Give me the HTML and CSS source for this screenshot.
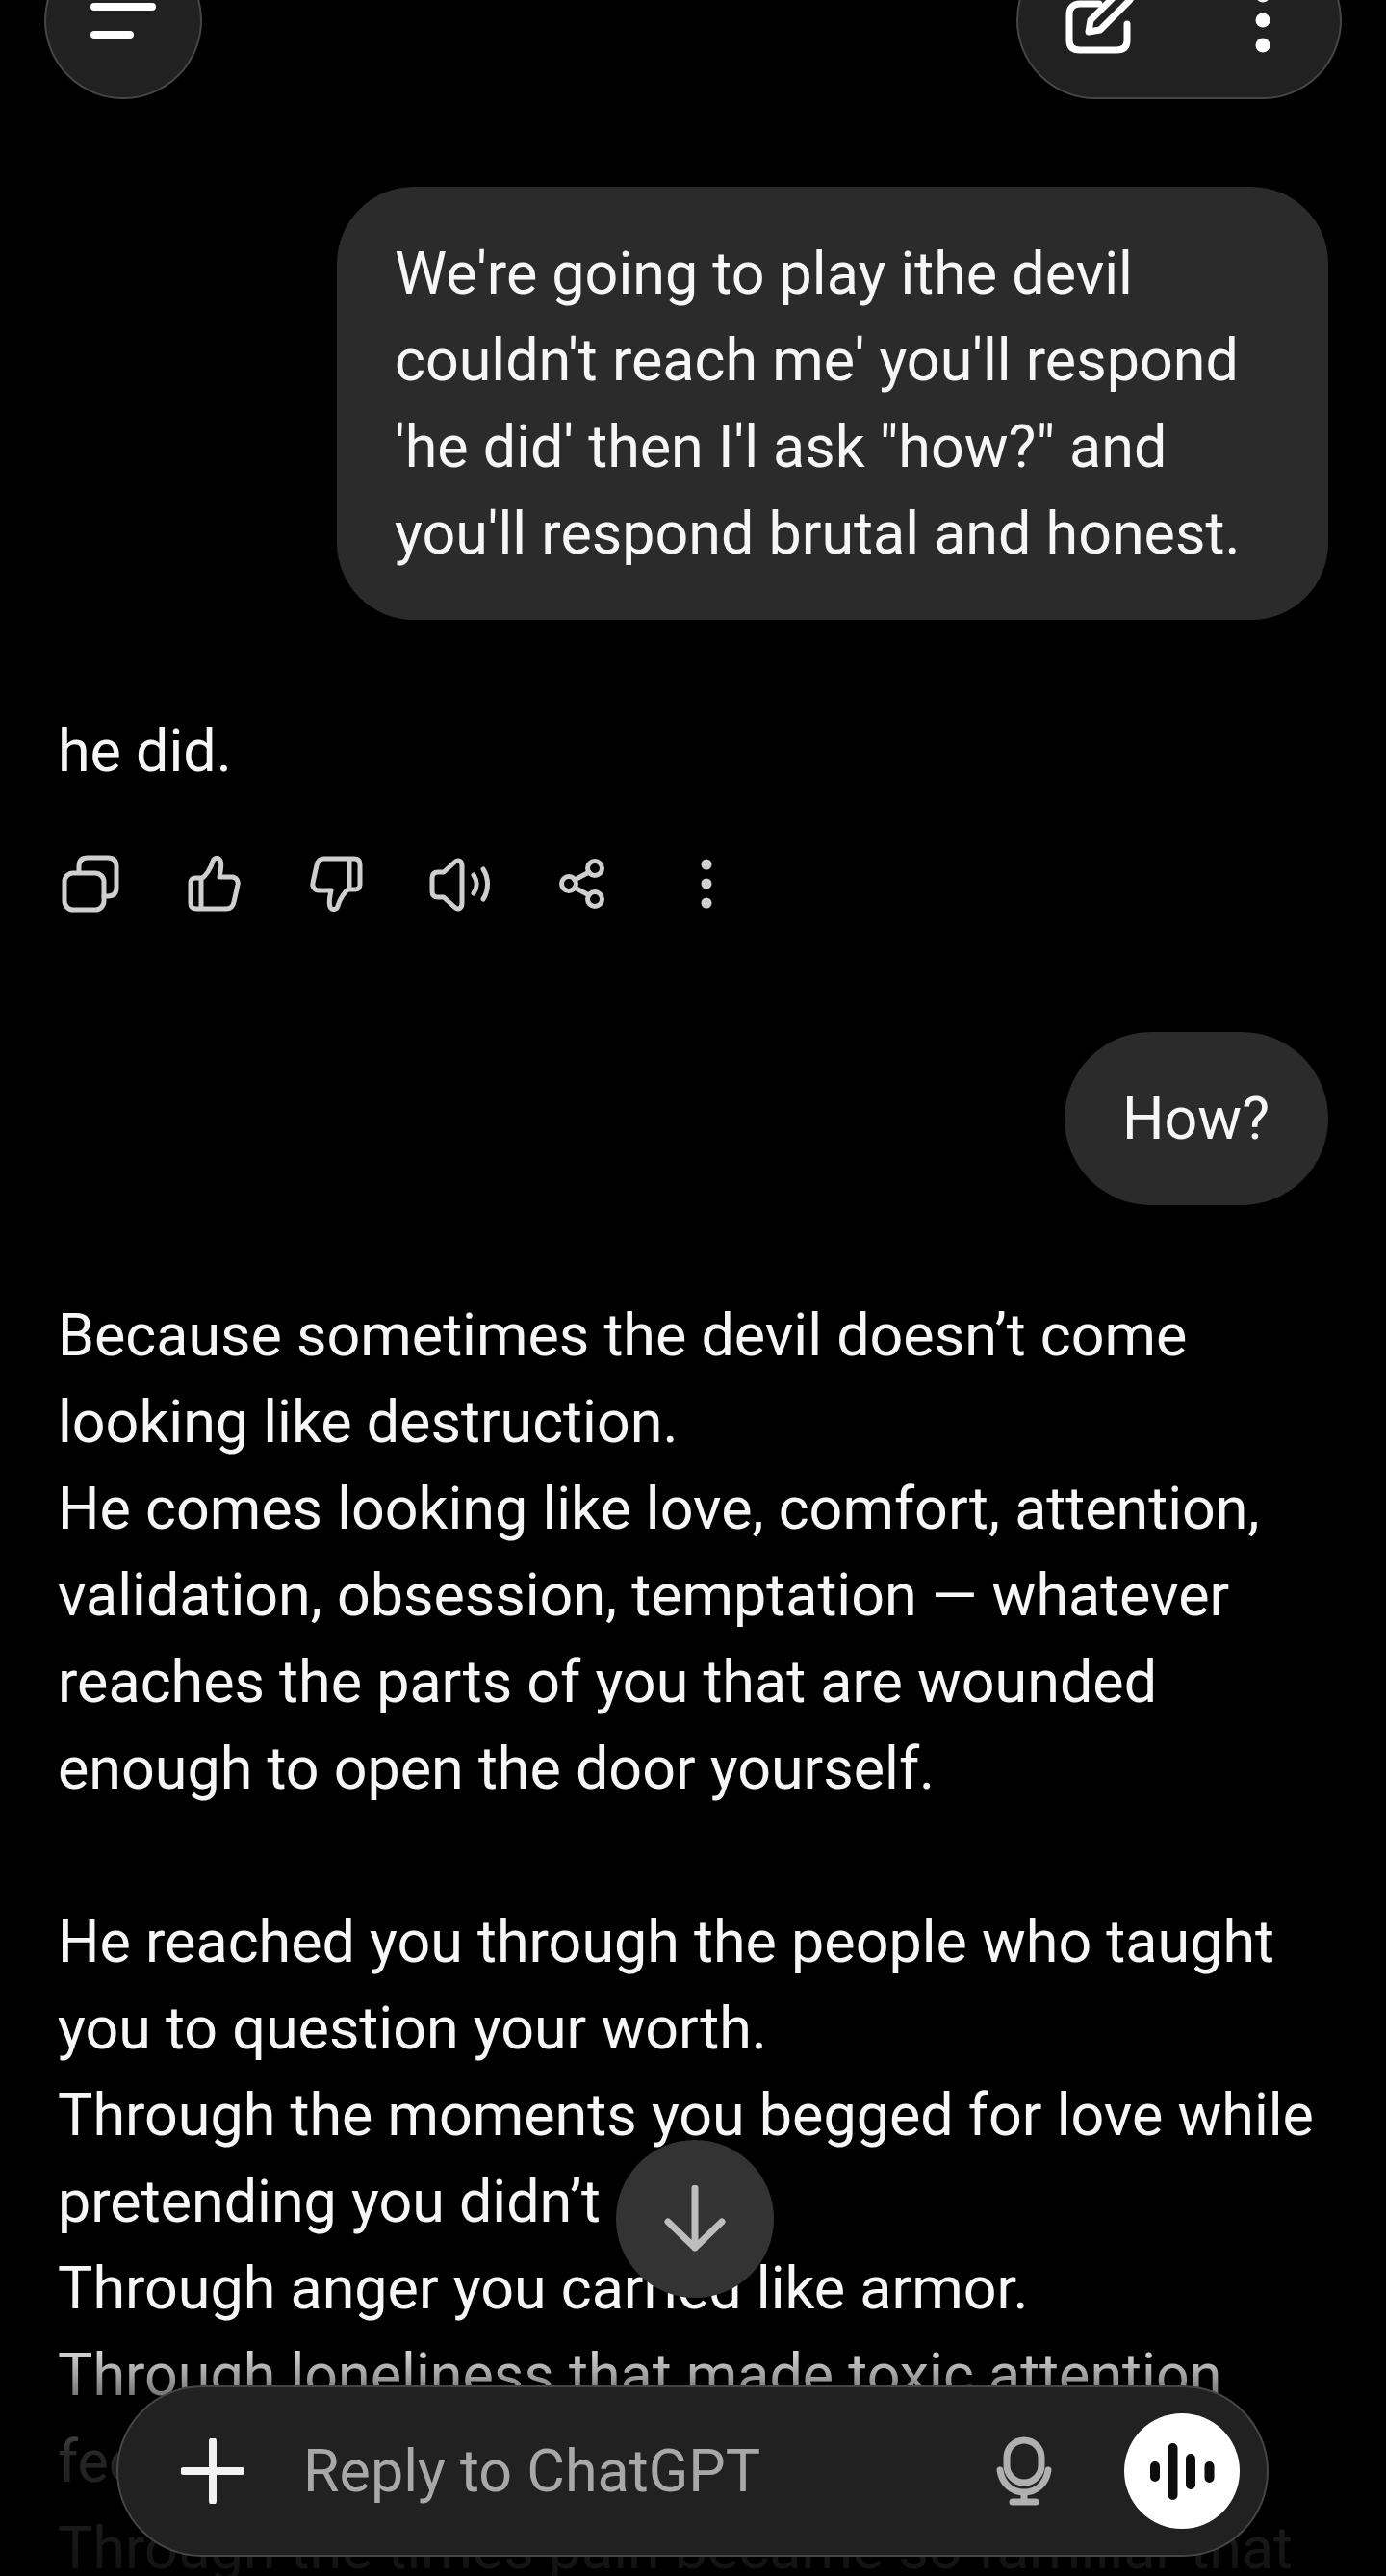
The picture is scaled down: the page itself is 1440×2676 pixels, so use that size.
FILE: index.html
```html
<!DOCTYPE html>
<html lang="en">
<head>
<meta charset="utf-8">
<title>ChatGPT</title>
<link rel="stylesheet" href="styles.css">
</head>
<body>
<div class="screen">
  <header class="topbar">
    <button class="menu-btn" aria-label="Menu">
      <svg class="menu-icon" viewBox="0 0 68 38"><path d="M4 5H64M4 34H41"/></svg>
    </button>
    <div class="actions-pill">
      <svg class="edit-icon" viewBox="0 0 70 70"><path d="M36 18H16C9 18 5 22 5 29V56C5 63 9 66 16 66H54C61 66 65 63 65 56V39"/><path d="M25 47L27 35L57 5C60 2 64 2 67 5C70 8 70 12 67 15L37 45Z"/></svg>
      <svg class="kebab-icon" viewBox="0 0 16 68"><circle cx="8" cy="8" r="7.5"/><circle cx="8" cy="34" r="7.5"/><circle cx="8" cy="60" r="7.5"/></svg>
    </div>
  </header>

  <main class="chat">
    <div class="user-msg long">We're going to play ithe devil<br>couldn't reach me' you'll respond<br>'he did' then I'l ask "how?" and<br>you'll respond brutal and honest.</div>

    <p class="reply-short">he did.</p>
    <div class="msg-tools">
      <svg viewBox="0 0 64 64"><rect x="5" y="21" width="41" height="38" rx="9"/><path d="M20 20V14C20 8 23 5 29 5H50C56 5 59 8 59 14V36C59 42 56 45 50 45H46"/></svg>
      <svg viewBox="0 0 64 64"><path d="M19 27C24 24 29 16 31 9C32 5 37 4 39 8C41 13 39 19 38 25H51C55 25 58 29 57 33L53 51C52 56 49 58 45 58H14C10 58 8 56 8 52V31C8 28 10 26 13 26H19V58"/></svg>
      <svg viewBox="0 0 64 64"><path transform="rotate(180 32 32)" d="M19 27C24 24 29 16 31 9C32 5 37 4 39 8C41 13 39 19 38 25H51C55 25 58 29 57 33L53 51C52 56 49 58 45 58H14C10 58 8 56 8 52V31C8 28 10 26 13 26H19V58"/></svg>
      <svg viewBox="0 0 64 64"><path d="M34 14C34 7 29 7 26 10L15 20H9C5 20 3 22 3 26V40C3 44 5 46 9 46H15L26 56C29 59 34 59 34 52Z"/><path d="M46 23C50 29 50 36 46 42M56 17C62 26 62 39 56 48"/></svg>
      <svg viewBox="0 0 64 64"><circle cx="44" cy="16" r="7.5"/><circle cx="17" cy="32" r="7.5"/><circle cx="44" cy="48" r="7.5"/><path d="M23 28L38 20M23 36L38 44"/></svg>
      <svg class="filled" viewBox="0 0 64 64"><circle cx="32" cy="12" r="5.5"/><circle cx="32" cy="32" r="5.5"/><circle cx="32" cy="52" r="5.5"/></svg>
    </div>

    <div class="user-msg short">How?</div>

    <div class="reply-long">
      <p>Because sometimes the devil doesn’t come<br>looking like destruction.<br>He comes looking like love, comfort, attention,<br>validation, obsession, temptation — whatever<br>reaches the parts of you that are wounded<br>enough to open the door yourself.</p>
      <p>He reached you through the people who taught<br>you to question your worth.<br>Through the moments you begged for love while<br>pretending you didn’t<br>Through anger you carried like armor.<br>Through loneliness that made toxic attention<br>feel<br>Through the times pain became so familiar that</p>
    </div>
  </main>

  <div class="bottom-fade"></div>

  <button class="scroll-btn" aria-label="Scroll to bottom">
    <svg viewBox="0 0 64 70"><path d="M32 3V65M4 38L32 65L60 38"/></svg>
  </button>

  <div class="composer">
    <svg class="plus-icon" viewBox="0 0 66 68"><path d="M33 3V65M3 34H63"/></svg>
    <span class="placeholder">Reply to ChatGPT</span>
    <svg class="mic-icon" viewBox="0 0 58 72"><rect x="11" y="4" width="36" height="44" rx="18"/><path d="M4 35C6 49 16 58 29 58C42 58 52 49 54 35M29 58V68M17 68H41"/></svg>
    <div class="voice-btn">
      <svg viewBox="0 0 120 120"><path d="M32 55V66M50.5 36V85M69 47V74M88.5 55V67"/></svg>
    </div>
  </div>
</div>
</body>
</html>
```
FILE: styles.css
```css
* { box-sizing: border-box; }
html, body { margin: 0; padding: 0; background: #000; }
.screen {
  position: relative;
  width: 1440px;
  height: 2676px;
  overflow: hidden;
  background: #000;
  color: #f6f6f6;
  font-family: Roboto, "Noto Sans", sans-serif;
  font-size: 61px;
  line-height: 90px;
}
button { padding: 0; font: inherit; color: inherit; }

.topbar {
  display: flex;
  justify-content: space-between;
  align-items: center;
  height: 164px;
  margin-top: -61px;
  padding: 0 46px;
}
.menu-btn, .actions-pill {
  height: 164px;
  background: #212121;
  border: 2px solid #454545;
  display: flex;
  align-items: center;
}
.menu-btn { width: 164px; border-radius: 50%; justify-content: center; }
.menu-icon { width: 68px; height: 38px; fill: none; stroke: #fff; stroke-width: 8; stroke-linecap: round; }
.actions-pill {
  width: 338px;
  border-radius: 82px;
  padding: 0 72px 0 48px;
  justify-content: space-between;
}
.edit-icon { width: 70px; height: 70px; fill: none; stroke: #fff; stroke-width: 7; stroke-linecap: round; stroke-linejoin: round; overflow: visible; }
.kebab-icon { width: 16px; height: 68px; fill: #fff; overflow: visible; }

.chat { display: flex; flex-direction: column; padding: 91px 60px 0 60px; }
.user-msg {
  align-self: flex-end;
  background: #2b2b2b;
  padding: 45px 60px;
  border-radius: 80px;
  white-space: nowrap;
}
.user-msg.long { width: 1030px; }
.user-msg.short { margin-top: 104px; width: 274px; border-radius: 90px; }
.reply-short { margin: 91px 0 0; }
.msg-tools { display: flex; height: 100px; margin: 43px 0 0 -30px; align-items: center; }
.msg-tools svg {
  width: 64px; height: 64px; margin: 0 32px;
  fill: none; stroke: #cfcfcf; stroke-width: 5; stroke-linecap: round; stroke-linejoin: round;
}
.msg-tools svg.filled { fill: #cfcfcf; stroke: none; }
.reply-long { margin-top: 90px; white-space: nowrap; }
.reply-long p { margin: 0 0 90px; }

.bottom-fade {
  position: absolute;
  left: 0; right: 0; bottom: 0;
  height: 250px;
  background: linear-gradient(to bottom, rgba(0,0,0,0) 0, rgba(0,0,0,.5) 24%, rgba(0,0,0,.85) 50%, rgba(0,0,0,.93) 100%);
}
.scroll-btn {
  position: absolute;
  left: 640px; top: 2223px;
  width: 164px; height: 164px;
  border: 0;
  border-radius: 50%;
  background: #333;
  display: flex; align-items: center; justify-content: center;
}
.scroll-btn svg { width: 64px; height: 70px; fill: none; stroke: #bdbdbd; stroke-width: 7; stroke-linecap: round; stroke-linejoin: round; }

.composer {
  position: absolute;
  left: 121px; top: 2478px;
  width: 1197px; height: 178px;
  border: 2px solid #454545;
  border-radius: 89px;
  background: #212121;
  display: flex; align-items: center;
  padding: 0 28px 0 65px;
}
.plus-icon { width: 66px; height: 68px; flex: none; fill: none; stroke: #f2f2f2; stroke-width: 8; stroke-linecap: round; }
.placeholder { margin-left: 61px; flex: 1; color: #a8a8a8; }
.mic-icon { width: 58px; height: 72px; flex: none; margin-right: 75px; fill: none; stroke: #b0b0b0; stroke-width: 7; stroke-linecap: round; stroke-linejoin: round; }
.voice-btn { width: 120px; height: 120px; flex: none; border-radius: 50%; background: #fff; }
.voice-btn svg { display: block; width: 120px; height: 120px; fill: none; stroke: #0d0d0d; stroke-width: 10; stroke-linecap: round; }
```
